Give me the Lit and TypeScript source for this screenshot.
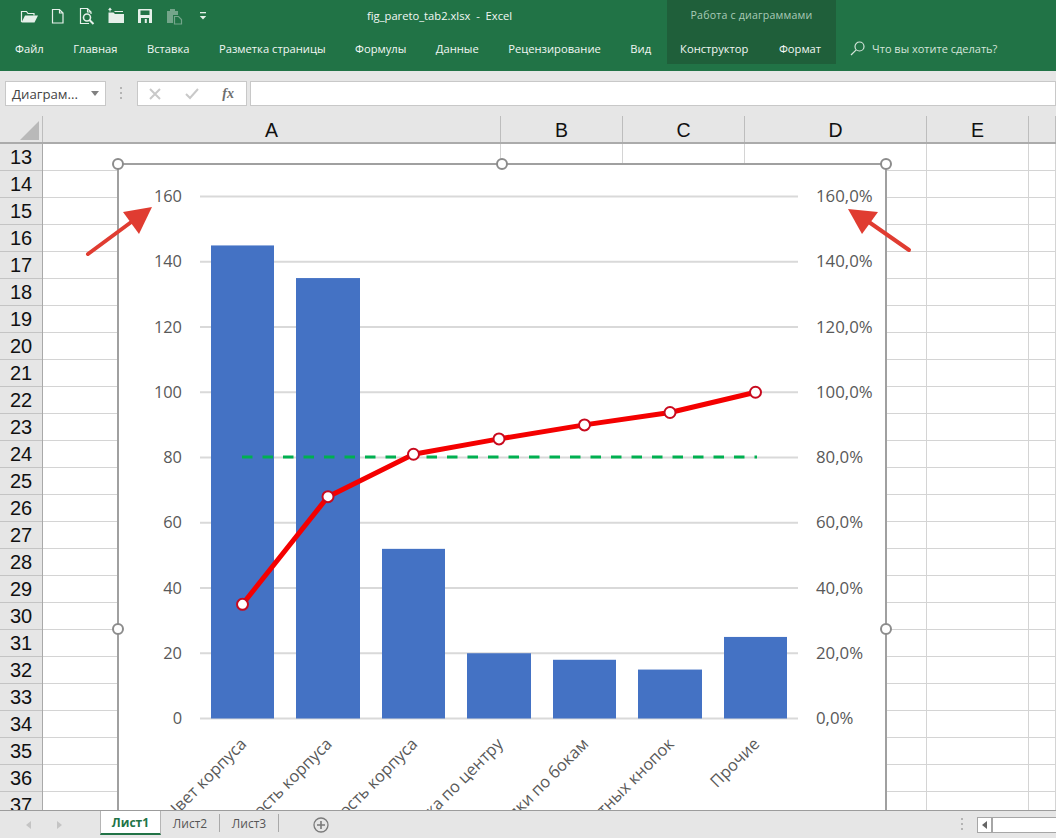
import { LitElement, html, css, svg } from 'lit';
import { customElement } from 'lit/decorators.js';

const TABS = ['Файл', 'Главная', 'Вставка', 'Разметка страницы', 'Формулы', 'Данные', 'Рецензирование', 'Вид'];
const COLUMNS = ['A', 'B', 'C', 'D', 'E', ''];
const ROWS = Array.from({ length: 25 }, (_, i) => i + 13);

const ZERO_Y = 718.5;
const SCALE = 3.2625;
const y = (v: number) => ZERO_Y - v * SCALE;

const BARS = [
  { x: 211, w: 63, v: 145, cx: 242.5, cum: 35, label: 'Цвет корпуса' },
  { x: 296, w: 64, v: 135, cx: 328, cum: 68, label: 'Прочность корпуса' },
  { x: 382, w: 63, v: 52, cx: 413.5, cum: 81, label: 'Жёсткость корпуса' },
  { x: 467, w: 64, v: 20, cx: 499, cum: 85.7, label: 'Кнопка по центру' },
  { x: 553, w: 63, v: 18, cx: 584.5, cum: 90, label: 'Кнопки по бокам' },
  { x: 638, w: 64, v: 15, cx: 670, cum: 93.8, label: 'Ход контактных кнопок' },
  { x: 724, w: 63, v: 25, cx: 755.5, cum: 100, label: 'Прочие' },
];
const TICKS = [0, 20, 40, 60, 80, 100, 120, 140, 160];
const HANDLES = [[118, 164], [502, 164], [886, 164], [118, 629], [886, 629]];

@customElement('app-root')
export class AppRoot extends LitElement {
  static styles = css`
    :host {
      display: block;
      width: 1056px;
      height: 838px;
      overflow: hidden;
      background: #e6e6e6;
      font-family: 'Open Sans', 'Noto Sans', sans-serif;
    }

    /* ribbon */
    .ribbon {
      height: 71px;
      background: #217346;
      color: #f2f7f4;
      font-size: 11.2px;
    }
    .title-row {
      display: flex;
      height: 35px;
      box-sizing: border-box;
      align-items: stretch;
    }
    .qat {
      display: flex;
      width: 367px;
      box-sizing: border-box;
      padding: 0 0 4px 20px;
      gap: 11px;
      align-items: center;
    }
    .qat-icon {
      width: 18px;
      height: 18px;
      display: block;
      color: #e6f0ea;
    }
    .title {
      width: 300px;
      white-space: pre;
      line-height: 31px;
    }
    .context-label {
      width: 169px;
      background: #1f5f3a;
      color: #a9cbb7;
      text-align: center;
      line-height: 31px;
      font-size: 10.6px;
      letter-spacing: 0.2px;
    }
    .tab-row {
      display: flex;
      height: 29px;
      padding-left: 15px;
      gap: 29.5px;
      align-items: flex-start;
      line-height: 27px;
    }
    .context-tabs {
      display: flex;
      height: 29px;
      gap: 30.5px;
      padding: 0 13px;
      background: #1f5f3a;
      margin-left: -13.5px;
      width: 169px;
      box-sizing: border-box;
    }
    .search {
      display: flex;
      align-items: center;
      height: 27px;
      gap: 7px;
      margin-left: -15.5px;
      color: #d5e5db;
      font-size: 11px;
    }

    /* formula bar */
    .formula-bar {
      display: flex;
      height: 45px;
      box-sizing: border-box;
      padding: 10px 0 10px 5px;
      align-items: stretch;
    }
    .box {
      background: #fff;
      border: 1px solid #c8c8c8;
      box-sizing: border-box;
      display: flex;
      align-items: center;
    }
    .name-box {
      width: 101px;
      padding: 0 6px;
      justify-content: space-between;
      font-size: 13.2px;
      color: #444;
    }
    .caret {
      width: 0;
      height: 0;
      border: 4px solid transparent;
      border-top: 5px solid #808080;
      border-bottom: 0;
    }
    .grip {
      width: 31px;
      display: flex;
      align-items: center;
      justify-content: center;
    }
    .buttons {
      width: 110px;
      padding: 0 12px 0 11px;
      justify-content: space-between;
    }
    .fx {
      font: italic bold 14px 'Liberation Serif', serif;
      color: #6e6e6e;
    }
    .input {
      flex: 1;
      margin-left: 3px;
    }

    /* sheet */
    .col-headers {
      display: grid;
      grid-template-columns: 43px 458px 122px 122px 182px 102px 1fr;
      height: 28px;
      box-sizing: border-box;
      border-bottom: 2px solid #ababab;
    }
    .col-header {
      display: flex;
      align-items: center;
      justify-content: center;
      font: 19.5px 'Liberation Sans', sans-serif;
      color: #111;
      border-right: 1px solid #bdbdbd;
      box-sizing: border-box;
      padding-top: 2px;
    }
    .corner {
      display: flex;
      align-items: flex-end;
      padding: 0 0 2px 20px;
      box-sizing: border-box;
      border-right: 1px solid #bdbdbd;
    }
    .sheet {
      position: relative;
      display: flex;
      height: 666px;
      overflow: hidden;
      background: #fff;
    }
    .row-headers {
      width: 43px;
      flex: none;
      box-sizing: border-box;
      border-right: 1px solid #a9a9a9;
      background: #e6e6e6;
    }
    .row-header {
      height: 27px;
      box-sizing: border-box;
      border-bottom: 1px solid #c4c4c4;
      display: flex;
      align-items: center;
      justify-content: center;
      font: 20px 'Liberation Sans', sans-serif;
      color: #111;
    }
    .cells {
      flex: 1;
      display: grid;
      grid-template-columns: 458px 122px 122px 182px 102px 1fr;
      grid-auto-rows: 27px;
    }
    .cell {
      box-sizing: border-box;
      border-right: 1px solid #d4d4d4;
      border-bottom: 1px solid #d4d4d4;
    }
    .chart {
      position: absolute;
      left: 0;
      top: 0;
      width: 1056px;
      height: 666px;
    }
    .frame {
      fill: #fff;
      stroke: #a0a0a0;
      stroke-width: 2;
    }
    .gridline {
      stroke: #d9d9d9;
      stroke-width: 2;
    }
    .bar {
      fill: #4472c4;
    }
    .target {
      stroke: #00b050;
      stroke-width: 3;
      stroke-dasharray: 10.5 10;
      fill: none;
    }
    .pareto {
      stroke: #f40000;
      stroke-width: 5;
      stroke-linejoin: round;
      fill: none;
    }
    .marker {
      fill: #fff;
      stroke: #c80a1e;
      stroke-width: 2;
    }
    .axis-label {
      font: 16.4px 'Open Sans', 'Noto Sans', sans-serif;
      fill: #595959;
    }
    .axis-label.right {
      font-size: 16.8px;
    }
    .handle {
      fill: #fff;
      stroke: #8c8c8c;
      stroke-width: 2;
    }
    .arrow {
      fill: #e03c31;
    }
    .arrow-shaft {
      stroke: #e03c31;
      stroke-width: 4;
      stroke-linecap: round;
    }

    /* sheet tabs */
    .sheet-bar {
      display: flex;
      height: 28px;
      box-sizing: border-box;
      border-top: 1px solid #9c9c9c;
      align-items: stretch;
      font-size: 12px;
      color: #555;
      background: #e6e6e6;
    }
    .nav {
      width: 100px;
      display: flex;
      align-items: center;
      gap: 26px;
      padding-left: 26px;
      box-sizing: border-box;
    }
    .sheet-tab {
      display: flex;
      align-items: center;
      justify-content: center;
      margin-bottom: 3px;
    }
    .sheet-tab.active {
      width: 61px;
      background: #fff;
      color: #217346;
      font-weight: 700;
      border-bottom: 2px solid #217346;
      border-left: 1px solid #b5b5b5;
      border-right: 1px solid #b5b5b5;
      box-sizing: border-box;
    }
    .sheet-tab.plain {
      width: 59px;
      border-right: 1px solid #a9a9a9;
      box-sizing: border-box;
      margin-top: 3px;
      margin-bottom: 6px;
    }
    .add {
      margin-left: 34px;
      align-self: center;
      display: block;
    }
    .spacer {
      flex: 1;
    }
    .bar-grip {
      align-self: center;
      display: block;
      margin-right: 14px;
    }
    .scrollbar {
      width: 79px;
      height: 16px;
      align-self: center;
      display: flex;
      background: #fff;
      border: 1px solid #a6a6a6;
      border-right: 0;
      box-sizing: border-box;
    }
    .scroll-btn {
      width: 15px;
      border-right: 2px solid #a6a6a6;
      display: flex;
      align-items: center;
      justify-content: center;
      box-sizing: border-box;
    }
  `;

  private qatIcons() {
    const open = html`<svg class="qat-icon" viewBox="0 0 18 18" fill="none" stroke="currentColor">
      <path d="M1.5 15V4.5h5l1.500 2h6v2" stroke-width="1.200" />
      <path d="M1.500 15.500 5 8.500h13l-3.500 7Z" fill="currentColor" stroke="none" />
    </svg>`;
    const doc = html`<svg class="qat-icon" viewBox="0 0 18 18" fill="none" stroke="currentColor" stroke-width="1.200">
      <path d="M3.500 2.500h7l3.500 3.500v10h-10.500Z M10.500 2.500V6H14" />
    </svg>`;
    const preview = html`<svg class="qat-icon" viewBox="0 0 18 18" fill="none" stroke="currentColor" stroke-width="1.200">
      <path d="M11 16.500H2.500V1.500h7l3.500 3.500v2 M9.500 1.500V5H13" />
      <circle cx="9" cy="10.500" r="3.500" stroke-width="1.600" />
      <path d="m11.500 13 4 4" stroke-width="2" />
    </svg>`;
    const folder = html`<svg class="qat-icon" viewBox="0 0 18 18" fill="currentColor">
      <path d="M1.500 5.500h5l1.500 1.500h9v9h-15.500Z" />
      <path d="M3 4.500V1.800M1.600 3 3 1.300 4.400 3M7.500 4.500H16" stroke="currentColor" stroke-width="1.100" fill="none" />
    </svg>`;
    const save = html`<svg class="qat-icon" viewBox="0 0 18 18" fill="currentColor">
      <path d="M2 3a1 1 0 0 1 1-1h12a1 1 0 0 1 1 1v13H2Z" />
      <rect x="4.500" y="3.500" width="9" height="4.500" fill="#217346" />
      <rect x="5" y="11" width="8" height="5" fill="#217346" />
      <rect x="8.800" y="12" width="2" height="4" fill="currentColor" />
    </svg>`;
    const paste = html`<svg class="qat-icon" viewBox="0 0 18 18" fill="#74a58a">
      <path d="M2 4h3V2h5v2h3v4H8v8H2Z" />
      <path d="M9.500 9.500h4l3 3v4.500h-7Z" fill="none" stroke="#74a58a" stroke-width="1.200" />
    </svg>`;
    const more = html`<svg class="qat-icon" viewBox="0 0 18 18" fill="currentColor">
      <rect x="6" y="5" width="6" height="1.300" />
      <path d="M5.800 9h6.400L9 12.500Z" />
    </svg>`;
    return [open, doc, preview, folder, save, paste, more];
  }

  private renderChart() {
    const points = BARS.map((b) => `${b.cx},${y(b.cum)}`).join(' ');
    return html`<svg class="chart" viewBox="0 144 1056 666">
      <rect class="frame" x="118" y="164" width="768" height="700" />
      ${TICKS.map((t) => svg`
        <line class="gridline" x1="200" x2="798" y1=${y(t)} y2=${y(t)} />
        <text class="axis-label" x="182" y=${y(t) + 5.5} text-anchor="end">${t}</text>
        <text class="axis-label right" x="816" y=${y(t) + 5.5}>${t},0%</text>
      `)}
      ${BARS.map((b) => svg`
        <rect class="bar" x=${b.x} y=${y(b.v)} width=${b.w} height=${b.v * SCALE} />
        <text class="axis-label" text-anchor="end" x=${b.cx + 5} y="745"
          transform="rotate(-45 ${b.cx + 5} 745)">${b.label}</text>
      `)}
      <line class="target" x1="242" x2="757" y1="457" y2="457" />
      <polyline class="pareto" points=${points} />
      ${BARS.map((b) => svg`<circle class="marker" cx=${b.cx} cy=${y(b.cum)} r="5.500" />`)}
      ${HANDLES.map(([hx, hy]) => svg`<circle class="handle" cx=${hx} cy=${hy} r="5" />`)}
      <line class="arrow-shaft" x1="88" y1="254" x2="134" y2="220" />
      <polygon class="arrow" points="152,207 123,212 139,234" />
      <line class="arrow-shaft" x1="909" y1="250" x2="866" y2="220" />
      <polygon class="arrow" points="848,209 878,212 862,234" />
    </svg>`;
  }

  render() {
    return html`
      <div class="ribbon">
        <div class="title-row">
          <div class="qat">${this.qatIcons()}</div>
          <div class="title">fig_pareto_tab2.xlsx  -  Excel</div>
          <div class="context-label">Работа с диаграммами</div>
        </div>
        <div class="tab-row">
          ${TABS.map((t) => html`<span>${t}</span>`)}
          <div class="context-tabs"><span>Конструктор</span><span>Формат</span></div>
          <div class="search">
            <svg width="15" height="15" viewBox="0 0 15 15" fill="none" stroke="currentColor" stroke-width="1.200">
              <circle cx="9.500" cy="5.500" r="4.500" />
              <path d="M6.200 8.800 1 14" />
            </svg>
            <span>Что вы хотите сделать?</span>
          </div>
        </div>
      </div>

      <div class="formula-bar">
        <div class="box name-box"><span>Диаграм...</span><span class="caret"></span></div>
        <div class="grip">
          <svg width="3" height="13" viewBox="0 0 3 13" fill="#b4b4b4">
            <rect y="0" width="2" height="2" /><rect y="5" width="2" height="2" /><rect y="10" width="2" height="2" />
          </svg>
        </div>
        <div class="box buttons">
          <svg width="12" height="12" viewBox="0 0 12 12" fill="none" stroke="#c9c9c9" stroke-width="2">
            <path d="m1 1 10 10M11 1 1 11" />
          </svg>
          <svg width="14" height="12" viewBox="0 0 14 12" fill="none" stroke="#c9c9c9" stroke-width="2">
            <path d="m1 6 4 4 8-9" />
          </svg>
          <span class="fx">fx</span>
        </div>
        <div class="box input"></div>
      </div>

      <div class="col-headers">
        <div class="corner">
          <svg width="19" height="19" viewBox="0 0 19 19"><path d="M19 0v19H0Z" fill="#b9b9b9" /></svg>
        </div>
        ${COLUMNS.map((c) => html`<div class="col-header">${c}</div>`)}
      </div>

      <div class="sheet">
        <div class="row-headers">
          ${ROWS.map((r) => html`<div class="row-header">${r}</div>`)}
        </div>
        <div class="cells">
          ${ROWS.map(() => COLUMNS.map(() => html`<div class="cell"></div>`))}
        </div>
        ${this.renderChart()}
      </div>

      <div class="sheet-bar">
        <div class="nav">
          <svg width="5" height="8" viewBox="0 0 5 8"><path d="M5 0v8L0 4Z" fill="#c4c4c4" /></svg>
          <svg width="5" height="8" viewBox="0 0 5 8"><path d="M0 0v8l5-4Z" fill="#c4c4c4" /></svg>
        </div>
        <div class="sheet-tab active">Лист1</div>
        <div class="sheet-tab plain">Лист2</div>
        <div class="sheet-tab plain">Лист3</div>
        <svg class="add" width="16" height="16" viewBox="0 0 16 16" fill="none" stroke="#7a7a7a">
          <circle cx="8" cy="8" r="7" stroke-width="1.300" />
          <path d="M8 4v8M4 8h8" stroke-width="1.600" />
        </svg>
        <div class="spacer"></div>
        <svg class="bar-grip" width="2" height="13" viewBox="0 0 2 13" fill="#b4b4b4">
          <rect y="0" width="2" height="2" /><rect y="5" width="2" height="2" /><rect y="10" width="2" height="2" />
        </svg>
        <div class="scrollbar">
          <div class="scroll-btn">
            <svg width="5" height="8" viewBox="0 0 5 8"><path d="M5 0v8L0 4Z" fill="#666" /></svg>
          </div>
        </div>
      </div>
    `;
  }
}
